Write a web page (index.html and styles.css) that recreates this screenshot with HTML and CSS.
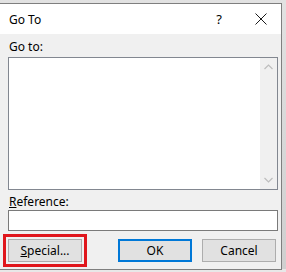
FILE: index.html
```html
<!DOCTYPE html>
<html>
<head>
<meta charset="utf-8">
<link rel="stylesheet" href="styles.css">
</head>
<body>
<div class="backdrop">
  <div class="dialog">
    <div class="titlebar">
      <span class="title">Go To</span>
      <span class="help">?</span>
      <span class="close">
        <svg width="12" height="12" viewBox="0 0 12 12"><path d="M0.5 0.5 L11.5 11.5 M11.5 0.5 L0.5 11.5" stroke="#1a1a1a" stroke-width="1" fill="none"/></svg>
      </span>
    </div>
    <div class="body">
      <div class="label">Go to:</div>
      <div class="listbox">
        <div class="list-area"></div>
        <div class="scrollbar">
          <svg width="9" height="6" viewBox="0 0 9 6"><path d="M0.5 5 L4.5 1 L8.5 5" stroke="#bdbdbd" stroke-width="1.2" fill="none"/></svg>
          <svg width="9" height="6" viewBox="0 0 9 6"><path d="M0.5 1 L4.5 5 L8.5 1" stroke="#bdbdbd" stroke-width="1.2" fill="none"/></svg>
        </div>
      </div>
      <div class="label ref-label"><u>R</u>eference:</div>
      <div class="input"></div>
      <div class="buttons">
        <button class="btn special"><u>S</u>pecial...</button>
        <div class="right-buttons">
          <button class="btn default">OK</button>
          <button class="btn">Cancel</button>
        </div>
      </div>
    </div>
  </div>
</div>
</body>
</html>
```
FILE: styles.css
```css
html, body {
  margin: 0;
  padding: 0;
}
body {
  width: 286px;
  height: 272px;
  overflow: hidden;
  background: #e8e8e8;
  font-family: "Noto Sans", "Open Sans", sans-serif;
  font-size: 12px;
  color: #000;
}
.backdrop {
  padding-top: 3px;
  height: 269px;
  box-sizing: border-box;
  background: linear-gradient(#e2e2e2, #cfcfcf);
}
.dialog {
  width: 282px;
  height: 267px;
  box-sizing: border-box;
  border: 1px solid #7f7f7f;
  border-left: none;
  background: #f0f0f0;
  display: flex;
  flex-direction: column;
}
.titlebar {
  height: 30px;
  background: #fff;
  display: flex;
  align-items: center;
  padding-left: 9px;
}
.title {
  flex: 1;
  font-size: 12px;
}
.help {
  width: 20px;
  text-align: center;
  margin-right: 26px;
  font-size: 13px;
}
.close {
  width: 12px;
  margin-right: 14px;
  display: flex;
}
.body {
  flex: 1;
  padding: 0 3px 0 8px;
  display: flex;
  flex-direction: column;
}
.label {
  height: 15px;
  margin-top: 5px;
  line-height: 15px;
  padding-left: 1px;
}
.listbox {
  margin-top: 3px;
  height: 133px;
  box-sizing: border-box;
  border: 1px solid #828790;
  background: #fff;
  display: flex;
}
.list-area {
  flex: 1;
}
.scrollbar {
  width: 17px;
  background: #f0f0f0;
  display: flex;
  flex-direction: column;
  justify-content: space-between;
  align-items: center;
  padding: 6px 0 6px;
}
.ref-label {
  margin-top: 4px;
}
.input {
  margin-top: 1px;
  height: 21px;
  box-sizing: border-box;
  border: 1px solid #7a7a7a;
  background: #fff;
}
.buttons {
  margin-top: 8px;
  display: flex;
  justify-content: space-between;
  padding-right: 2px;
}
.right-buttons {
  display: flex;
  gap: 10px;
}
.btn {
  width: 74px;
  height: 23px;
  box-sizing: border-box;
  border: 1px solid #adadad;
  background: #e1e1e1;
  font-family: "Noto Sans", "Open Sans", sans-serif;
  font-size: 12px;
  color: #000;
  padding: 0;
  margin: 0;
}
.default {
  border: 2px solid #0078d7;
}
.special {
  outline: 3px solid #e0161c;
  outline-offset: 2px;
}
```
